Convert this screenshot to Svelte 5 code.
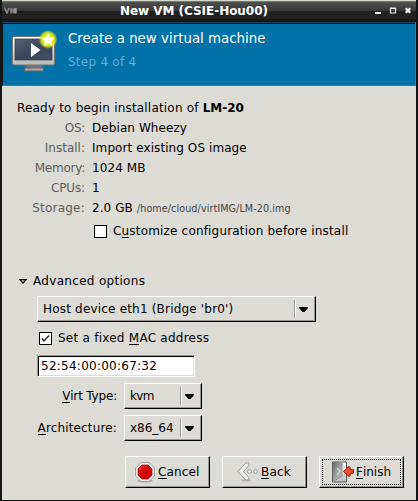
<script>
  const details = [
    { label: 'OS:', value: 'Debian Wheezy', labelSpacing: -0.3 },
    { label: 'Install:', value: 'Import existing OS image', labelSpacing: 0 },
    { label: 'Memory:', value: '1024 MB', labelSpacing: -0.25 },
    { label: 'CPUs:', value: '1', labelSpacing: -0.15 },
    { label: 'Storage:', value: '2.0 GB', path: '/home/cloud/virtIMG/LM-20.img', labelSpacing: 0.22 }
  ];
  let customize = $state(false);
  let fixedMac = $state(true);
</script>

{#snippet arrow()}
  <span class="sep"></span>
  <svg class="arrow" width="9" height="5" viewBox="0 0 9 5"><path d="M0 0h9v1L5.5 5h-2L0 1z" fill="#000" /></svg>
{/snippet}

<div class="window">
  <div class="titlebar">
    <svg class="logo" width="13" height="7" viewBox="0 0 13 7">
      <path d="M.5 .5l2.500 5.500L5 1M7 6.500V1l2 4 1.500-4v5.500M12 1v5.500" fill="none" stroke="#8f8f8f" stroke-width="1.500" />
      <path d="M4 5l2-4M8 3l1 3" stroke="#775056" stroke-width="1" />
    </svg>
    <span class="title">New VM (CSIE-Hou00)</span>
    <svg class="controls" width="38" height="8" viewBox="0 0 38 8">
      <path d="M1 5h6v2H1z" fill="#eee" />
      <path d="M16.500 1.500h5v4.500h-5zM16 1.200h6" fill="none" stroke="#eee" stroke-width="1.200" />
      <path d="M31.700 1.200l4.600 4.600M36.300 1.200l-4.600 4.600" stroke="#eee" stroke-width="2.200" />
    </svg>
  </div>

  <header>
    <svg class="vm" width="48" height="44" viewBox="0 0 48 44">
      <defs>
        <linearGradient id="bezel" x2="0" y2="1"><stop stop-color="#fff" /><stop offset="1" stop-color="#b9b9b9" /></linearGradient>
        <linearGradient id="screen" x2="1" y2="1"><stop stop-color="#56647a" /><stop offset=".5" stop-color="#3b4659" /><stop offset="1" stop-color="#435064" /></linearGradient>
        <radialGradient id="glow"><stop offset=".45" stop-color="#f5f500" /><stop offset=".75" stop-color="#d9e61c" stop-opacity=".85" /><stop offset="1" stop-color="#b8d838" stop-opacity="0" /></radialGradient>
      </defs>
      <path d="M15 35h16v3H15z" fill="#777" />
      <rect x="13.500" y="38" width="19" height="3" fill="#aaa" stroke="#666" />
      <rect x="1.500" y="6.500" width="42" height="28.500" rx="1.500" fill="url(#bezel)" stroke="#777" />
      <rect x="4" y="9" width="37" height="21" fill="url(#screen)" stroke="#2d3849" stroke-width=".7" />
      <path d="M20 13v14l9.500-7z" fill="#fff" />
      <circle cx="37" cy="9.500" r="9.500" fill="url(#glow)" />
      <path d="M37 3l1.900 4.400 4.800.4-3.600 3.200 1.100 4.700-4.200-2.500-4.200 2.500 1.100-4.700-3.600-3.200 4.800-.4z" fill="#fff" />
    </svg>
    <div class="headings">
      <div class="heading">Create a new virtual machine</div>
      <div class="step">Step 4 of 4</div>
    </div>
  </header>

  <main>
    <div class="ready">Ready to begin installation of <b>LM-20</b></div>
    {#each details as row}
      <div class="detail">
        <span class="label" style:letter-spacing="{row.labelSpacing}px">{row.label}</span>
        <span class="value">{row.value}</span>
        {#if row.path}<span class="path">{row.path}</span>{/if}
      </div>
    {/each}

    <button class="check customize" onclick={() => (customize = !customize)}>
      <span class="box">{#if customize}<svg width="11" height="11" viewBox="0 0 11 11"><path d="M2 5l2.500 3L9 2" fill="none" stroke="#111" stroke-width="1.300" /></svg>{/if}</span>
      <span class="t-customize">C<u>u</u>stomize configuration before install</span>
    </button>

    <div class="expander">
      <svg width="8" height="5" viewBox="0 0 8 5"><path d="M1 .7h6L4 4z" fill="#dcdbd6" stroke="#000" stroke-width="1.200" /></svg>
      <span class="t-advanced">Advanced options</span>
    </div>

    <div class="combo network"><span class="t-network">Host device eth1 (Bridge 'br0')</span>{@render arrow()}</div>

    <button class="check mac" onclick={() => (fixedMac = !fixedMac)}>
      <span class="box">{#if fixedMac}<svg width="11" height="11" viewBox="0 0 11 11"><path d="M2 5.500l2 2.500L9 2.500" fill="none" stroke="#222" stroke-width="1.400" /></svg>{/if}</span>
      <span class="t-mac">Set a fixed <u>M</u>AC address</span>
    </button>

    <div class="entry"><span class="t-entry">52:54:00:00:67:32</span></div>

    <div class="field"><span class="name t-virt"><u>V</u>irt Type:</span><div class="combo small"><span class="t-kvm">kvm</span>{@render arrow()}</div></div>
    <div class="field"><span class="name t-arch"><u>A</u>rchitecture:</span><div class="combo small"><span class="t-x86">x86_64</span>{@render arrow()}</div></div>

    <div class="actions">
      <button class="btn cancel">
        <svg width="20" height="21" viewBox="0 0 20 21">
          <defs><linearGradient id="red" x2="1" y2="1"><stop stop-color="#f33" /><stop offset=".5" stop-color="#c00" /><stop offset="1" stop-color="#d00" /></linearGradient></defs>
          <ellipse cx="10" cy="19" rx="8" ry="1.500" fill="#aaa" />
          <path d="M6 .6h8L19.400 6v8L14 19.400H6L.6 14V6z" fill="#f6f6f4" stroke="#999" />
          <path d="M7 3h6l4 4v6l-4 4H7l-4-4V7z" fill="url(#red)" stroke="#b40000" stroke-width=".8" />
        </svg>
        <span class="t-cancel"><u>C</u>ancel</span>
      </button>
      <button class="btn back">
        <svg width="22" height="20" viewBox="0 0 22 20">
          <ellipse cx="9" cy="18.500" rx="5" ry="1.200" fill="#bbb" />
          <path d="M8.800 1h3v2.500L6.500 9.500l5.300 6V18h-3L1 9.500z" fill="#eeeeec" stroke="#999" />
          <circle cx="12.500" cy="9.500" r="1.900" fill="#eee" stroke="#999" />
          <circle cx="18.500" cy="9.500" r="1.900" fill="#eee" stroke="#999" />
        </svg>
        <span class="t-back"><u>B</u>ack</span>
      </button>
      <button class="btn finish">
        <svg width="23" height="22" viewBox="0 0 23 22">
          <defs>
            <linearGradient id="door" x2="1" y2="1"><stop stop-color="#666" /><stop offset=".6" stop-color="#aaa" /><stop offset="1" stop-color="#ccc" /></linearGradient>
            <linearGradient id="frame" x2="0" y2="1"><stop stop-color="#fff" /><stop offset="1" stop-color="#bbb" /></linearGradient>
          </defs>
          <path d="M1.500 1h14v20h-14z" fill="url(#frame)" stroke="#555" />
          <path d="M1.500 1H11v14l-9 6z" fill="url(#door)" />
          <path d="M3 20l8-5V2" fill="none" stroke="#888" stroke-width=".8" />
          <path d="M6 7l3 3-3 4" fill="none" stroke="#ddd" stroke-width="1.200" />
          <path d="M12.500 10.500l5.500-5 1.200 1v2.200h3.300v3.600h-3.300v2.200l-1.200 1z" fill="#f05030" stroke="#9e1607" />
        </svg>
        <span class="t-finish"><u>F</u>inish</span>
      </button>
    </div>
  </main>
</div>

<style>
  .window {
    box-sizing: border-box;
    width: 418px;
    height: 501px;
    display: flex;
    flex-direction: column;
    background: #dcdbd6;
    border-left: 2px solid #151617;
    border-right: 2px solid #151617;
    border-bottom: 1px solid #151617;
    font: 12px/20px 'DejaVu Sans', sans-serif;
    color: #000;
    overflow: hidden;
  }
  .titlebar {
    box-sizing: border-box;
    height: 22px;
    flex: none;
    display: flex;
    align-items: flex-start;
    border-top: 1px solid #d2d8ca;
    background: linear-gradient(#74786f 0 1px, #505050 1px, #363636 10px, #202020 10px, #222 18px, #171717 18px);
  }
  .logo { margin: 6px 0 0 2px; }
  .title {
    width: 254px;
    margin-left: 103px;
    font-weight: bold;
    letter-spacing: -0.04px;
    color: #fff;
    white-space: nowrap;
    line-height: 20px;
  }
  .controls { margin: 6px 0 0; }
  header {
    box-sizing: border-box;
    height: 64px;
    flex: none;
    display: flex;
    border: 1px solid #1d86c2;
    border-top-color: #0f4868;
    border-left: 1px solid #111;
    box-shadow: inset 0 1px #001018;
    background: #0072a8;
    color: #fff;
  }
  .vm { margin: 7px 0 0 8px; }
  .headings { margin-left: 9px; white-space: nowrap; }
  .heading { margin-top: 5px; font-size: 13.300px; line-height: 22px; letter-spacing: 0.04px; }
  .step { margin-top: 2px; font-size: 12px; line-height: 21px; letter-spacing: 0.25px; color: #62addb; }
  main { padding-left: 15px; padding-top: 12px; white-space: nowrap; }
  .ready { letter-spacing: 0.19px; }
  .ready b { letter-spacing: 0; }
  .detail { display: flex; height: 20px; }
  .label { width: 68px; margin-right: 7px; text-align: right; color: #5c5c5a; }
  .value { letter-spacing: 0.08px; }
  .path { margin-left: 4px; font-size: 9.600px; line-height: 21px; letter-spacing: 0.09px; color: #444; }
  u { text-decoration: none; box-shadow: 0 -1px #000 inset; display: inline-block; line-height: 14px; }
  button { font: inherit; color: inherit; padding: 0; border: 0; background: none; text-align: left; }
  .check { display: flex; align-items: center; height: 20px; }
  .box { box-sizing: border-box; width: 13px; height: 13px; border: 1px solid #000; background: #fff; margin-right: 6px; display: block; line-height: 0; }
  .customize { margin: 3px 0 0 77px; }
  .t-customize { letter-spacing: 0.18px; }
  .expander { display: flex; align-items: center; gap: 6px; margin: 29px 0 0 2px; height: 22px; }
  .t-advanced { letter-spacing: 0.31px; }
  .t-network { letter-spacing: 0.19px; }
  .t-mac { letter-spacing: 0.25px; }
  .t-entry { letter-spacing: 0.25px; }
  .t-virt { letter-spacing: -0.18px; }
  .t-arch { letter-spacing: 0.15px; }
  .t-kvm { letter-spacing: -0.6px; }
  .t-cancel, .t-back { letter-spacing: 0.15px; }
  .combo {
    box-sizing: border-box;
    height: 26px;
    display: flex;
    align-items: center;
    padding: 0 6px 0 5px;
    border: 1px solid #fff;
    border-right-color: #000;
    border-bottom-color: #000;
    box-shadow: inset -1px -1px #999894;
  }
  .sep { width: 1px; height: 18px; margin-left: auto; border-left: 1px solid #999894; background: #fff; }
  .arrow { margin-left: 3px; margin-right: 1px; }
  .network { width: 279px; margin: 4px 0 0 20px; }
  .mac { margin: 6px 0 0 22px; }
  .entry {
    box-sizing: border-box;
    width: 158px;
    height: 22px;
    margin: 7px 0 0 20px;
    padding-left: 3px;
    background: #fff;
    border: 1px solid #999894;
    border-right-color: #fff;
    border-bottom-color: #fff;
    box-shadow: inset 1px 1px #000, inset -1px -1px #dcdbd6;
    line-height: 21px;
  }
  .field { display: flex; align-items: center; margin-top: 6px; }
  .name { width: 100px; margin-right: 7px; text-align: right; }
  .small { width: 78px; }
  .actions { display: flex; gap: 12px; margin: 15px 0 0 108px; }
  .btn {
    box-sizing: border-box;
    width: 85px;
    height: 32px;
    display: flex;
    align-items: center;
    border: 1px solid #fff;
    border-right-color: #000;
    border-bottom-color: #000;
    box-shadow: inset -1px -1px #999894;
    position: relative;
  }
  .cancel svg { margin: 0 3px 0 9px; }
  .back svg { margin: 0 2px 0 14px; }
  .finish svg { margin: 0 2px 0 11px; }
  .finish::after { content: ''; position: absolute; inset: 2px; border: 1px dotted #000; }
</style>
